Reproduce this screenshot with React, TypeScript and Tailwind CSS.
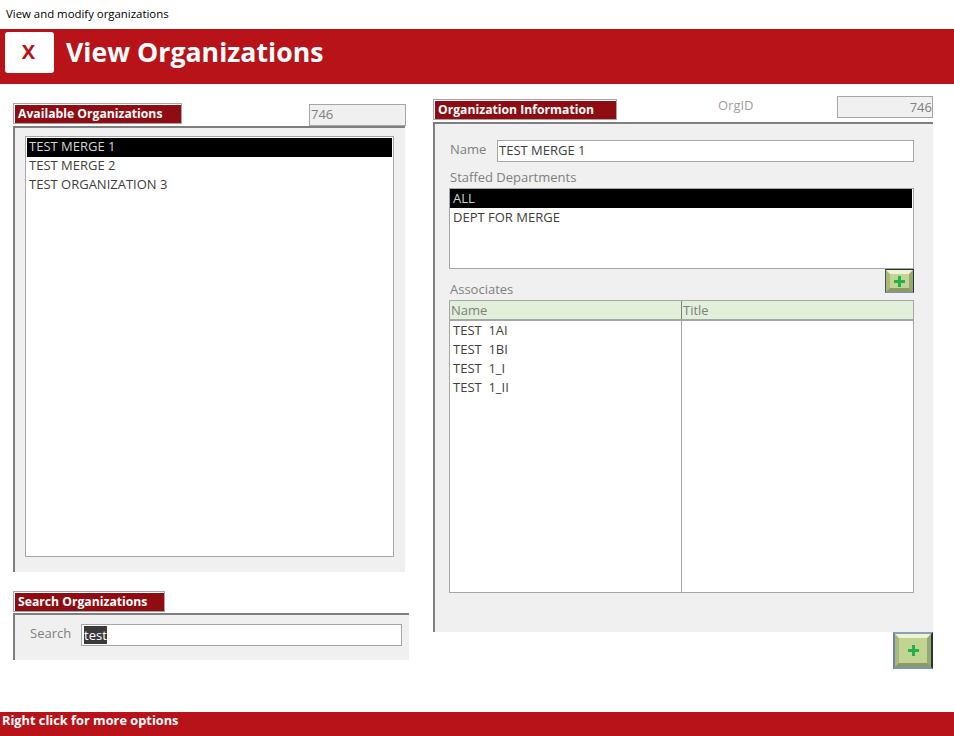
const orgs = ['TEST MERGE 1', 'TEST MERGE 2', 'TEST ORGANIZATION 3'];
const depts = ['ALL', 'DEPT FOR MERGE'];
const associates = ['TEST  1AI', 'TEST  1BI', 'TEST  1_I', 'TEST  1_II'];

function SectionTab({ title, width }: { title: string; width: string }) {
  return (
    <div className={`${width} h-[21px] border border-[#a6a6a6] pt-px pl-px bg-white`}>
      <div className="h-full bg-[#8f0d12] pl-[3px] text-[12.2px] font-bold leading-[17px] text-white">
        {title}
      </div>
    </div>
  );
}

function BevelButton({ big }: { big?: boolean }) {
  return (
    <div
      className={
        big
          ? 'w-[40px] h-[37px] border-2 border-t-[#8aa0b8] border-l-[#6b86a3] border-r-[#26323d] border-b-[#7d96b0]'
          : 'w-[29px] h-[24px] border border-t-[#26323d] border-l-[#3f5468] border-r-[#26323d] border-b-[#7d96b0]'
      }
    >
      <div className="h-full flex items-center justify-center bg-[#c2d492] border-[4px] border-t-[#eef3d2] border-l-[#a8b97e] border-r-[#97a86e] border-b-[#8c9a66]">
        <svg width="11" height="11" viewBox="0 0 11 11" fill="#22b14c">
          <rect x="4" y="0" width="3" height="11" />
          <rect x="0" y="4" width="11" height="3" />
        </svg>
      </div>
    </div>
  );
}

function ListRow({ label, selected, raised, tight }: { label: string; selected?: boolean; raised?: boolean; tight?: boolean }) {
  return (
    <div
      className={`h-[19px] text-[13px] whitespace-pre ${tight ? 'pl-[2px]' : 'pl-[3px]'} ${raised ? 'leading-[17px]' : 'leading-[19px]'} ${
        selected ? 'bg-black text-[#d4d4d4]' : 'text-[#404040]'
      }`}
    >
      {label}
    </div>
  );
}

export default function App() {
  return (
    <div className="w-[954px] h-[736px] flex flex-col bg-white font-['Open_Sans',sans-serif] overflow-hidden">
      <div className="h-[29px] pl-[6px] pt-[6px] text-[11.4px] leading-[16px] text-black">
        View and modify organizations
      </div>

      {/* Banner */}
      <div className="h-[55px] bg-[#b81318] flex items-start pl-[5px] pt-[3px] gap-[12px]">
        <div className="w-[49px] h-[41px] bg-white rounded-[3px] pb-[2px] pr-[2px] flex items-center justify-center text-[20px] font-bold text-[#b81318]">
          X
        </div>
        <h1 className="pt-[4px] text-[26.7px] font-bold text-white leading-[32px]">View Organizations</h1>
      </div>

      <div className="flex-1 flex pl-[13px]">
        {/* Left column */}
        <div className="w-[396px] pt-[19px]">
          <div className="flex justify-between h-[23px] pr-[3px]">
            <SectionTab title="Available Organizations" width="w-[169px]" />
            <div className="mt-px w-[97px] h-[22px] border border-[#a6a6a6] bg-[#f0f0f0] pl-[1px] text-[13px] leading-[19px] text-[#7f7f7f]">
              746
            </div>
          </div>
          <div className="w-[392px] h-[446px] border-t-2 border-l-2 border-[#7f7f7f] bg-[#f0f0f0] pt-[8px] pl-[10px]">
            <div className="w-[369px] h-[421px] border border-[#a6a6a6] bg-white p-px">
              {orgs.map((o, i) => (
                <ListRow key={o} label={o} selected={i === 0} raised tight />
              ))}
            </div>
          </div>

          <div className="mt-[19px] mb-px">
            <SectionTab title="Search Organizations" width="w-[152px]" />
          </div>
          <div className="h-[47px] border-t-2 border-l-2 border-[#7f7f7f] bg-[#f0f0f0] flex items-start pt-[9px] pl-[15px]">
            <span className="w-[51px] text-[13px] leading-[19px] text-[#7f7f7f]">Search</span>
            <div className="w-[321px] h-[22px] border border-[#a6a6a6] bg-white pl-[2px] pt-px">
              <span className="block w-[23px] h-[18px] bg-[#3a3a3a] text-[13px] leading-[18px] text-white">
                test
              </span>
            </div>
          </div>
        </div>

        {/* Right column */}
        <div className="ml-[24px] w-[500px] pt-[12px]">
          <div className="flex h-[26px] items-start">
            <div className="pt-[3px]">
              <SectionTab title="Organization Information" width="w-[184px]" />
            </div>
            <span className="ml-[101px] text-[13px] leading-[19px] text-[#a0a0a0]">OrgID</span>
            <div className="ml-auto w-[96px] h-[22px] border border-[#a6a6a6] bg-[#f0f0f0] text-right text-[13px] leading-[20px] text-[#7f7f7f]">
              746
            </div>
          </div>

          <div className="h-[510px] border-t-2 border-l-2 border-[#7f7f7f] bg-[#f0f0f0] pl-[14px] pr-[19px] pt-[16px]">
            <div className="flex items-start">
              <span className="w-[48px] pl-px text-[13px] leading-[19px] text-[#7f7f7f]">Name</span>
              <div className="flex-1 h-[22px] border border-[#a6a6a6] bg-white pl-px text-[13px] leading-[18px] text-[#404040]">
                TEST MERGE 1
              </div>
            </div>

            <div className="mt-[5px] h-[21px] pl-px text-[13px] leading-[21px] text-[#7f7f7f]">
              Staffed Departments
            </div>
            <div className="h-[81px] border border-[#a6a6a6] bg-white pr-px">
              {depts.map((d, i) => (
                <ListRow key={d} label={d} selected={i === 0} />
              ))}
            </div>

            <div className="flex justify-between h-[31px] items-start">
              <span className="pl-px pt-[11px] text-[13px] leading-[19px] text-[#7f7f7f]">Associates</span>
              <BevelButton />
            </div>

            <div className="h-[293px] border border-[#a6a6a6] bg-white flex flex-col">
              <div className="h-[20px] flex border-b-2 border-[#a6a6a6] bg-[#e2efda] text-[13px] leading-[18px] text-[#7f7f7f]">
                <div className="w-[232px] pl-px border-r border-[#7f7f7f]">Name</div>
                <div className="pl-px">Title</div>
              </div>
              <div className="flex-1 flex">
                <div className="w-[232px] border-r border-[#a6a6a6] pt-px">
                  {associates.map((a) => (
                    <ListRow key={a} label={a} raised />
                  ))}
                </div>
              </div>
            </div>
          </div>

          <div className="flex justify-end">
            <BevelButton big />
          </div>
        </div>
      </div>

      {/* Footer */}
      <div className="h-[24px] bg-[#b81318] pl-[2px] text-[12.8px] font-bold leading-[17px] text-white">
        Right click for more options
      </div>
    </div>
  );
}
